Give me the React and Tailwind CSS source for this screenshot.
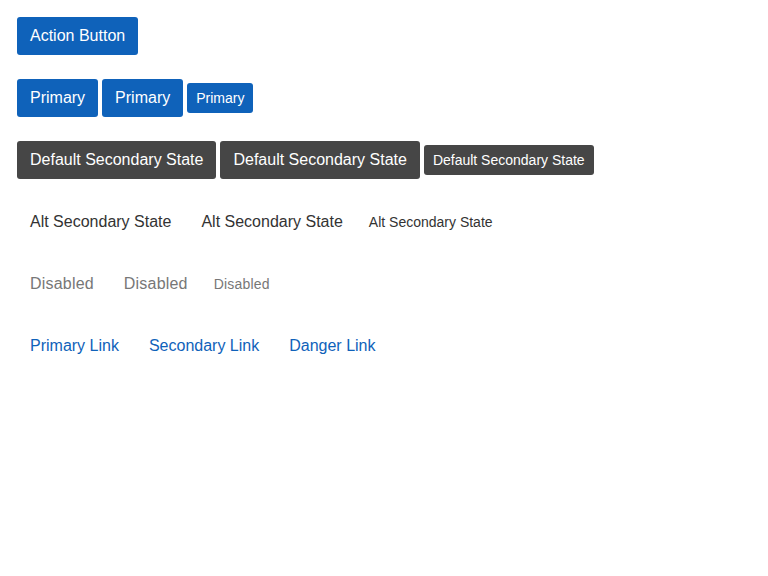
import React from 'react';

const base = "inline-flex items-center justify-center rounded-[3px] whitespace-nowrap leading-none";
const sizes = {
  md: "h-[38px] px-[13px] text-[16px]",
  sm: "h-[30px] px-[9px] text-[14px]",
};
const kinds = {
  primary: "bg-[#0f62ba] text-white",
  secondary: "bg-[#464646] text-white",
  alt: "bg-transparent text-[#333333]",
  disabled: "bg-transparent text-[#777777] tracking-[0.2px] cursor-not-allowed",
  link: "bg-transparent text-[#0f62ba]",
};

const Btn = ({ kind = 'primary', size = 'md', children }) => (
  <button className={`${base} ${sizes[size]} ${kinds[kind]}`}>{children}</button>
);

const Row = ({ kind, label }) => (
  <div className="flex items-center gap-1">
    <Btn kind={kind}>{label}</Btn>
    <Btn kind={kind}>{label}</Btn>
    <Btn kind={kind} size="sm">{label}</Btn>
  </div>
);

export default function App() {
  return (
    <div className="min-h-screen bg-white p-[17px] flex flex-col gap-6" style={{ fontFamily: '"Liberation Sans", Arial, sans-serif' }}>
      <div className="flex">
        <Btn>Action Button</Btn>
      </div>
      <Row kind="primary" label="Primary" />
      <Row kind="secondary" label="Default Secondary State" />
      <Row kind="alt" label="Alt Secondary State" />
      <Row kind="disabled" label="Disabled" />
      <div className="flex items-center gap-1">
        <Btn kind="link">Primary Link</Btn>
        <Btn kind="link">Secondary Link</Btn>
        <Btn kind="link">Danger Link</Btn>
      </div>
    </div>
  );
}
